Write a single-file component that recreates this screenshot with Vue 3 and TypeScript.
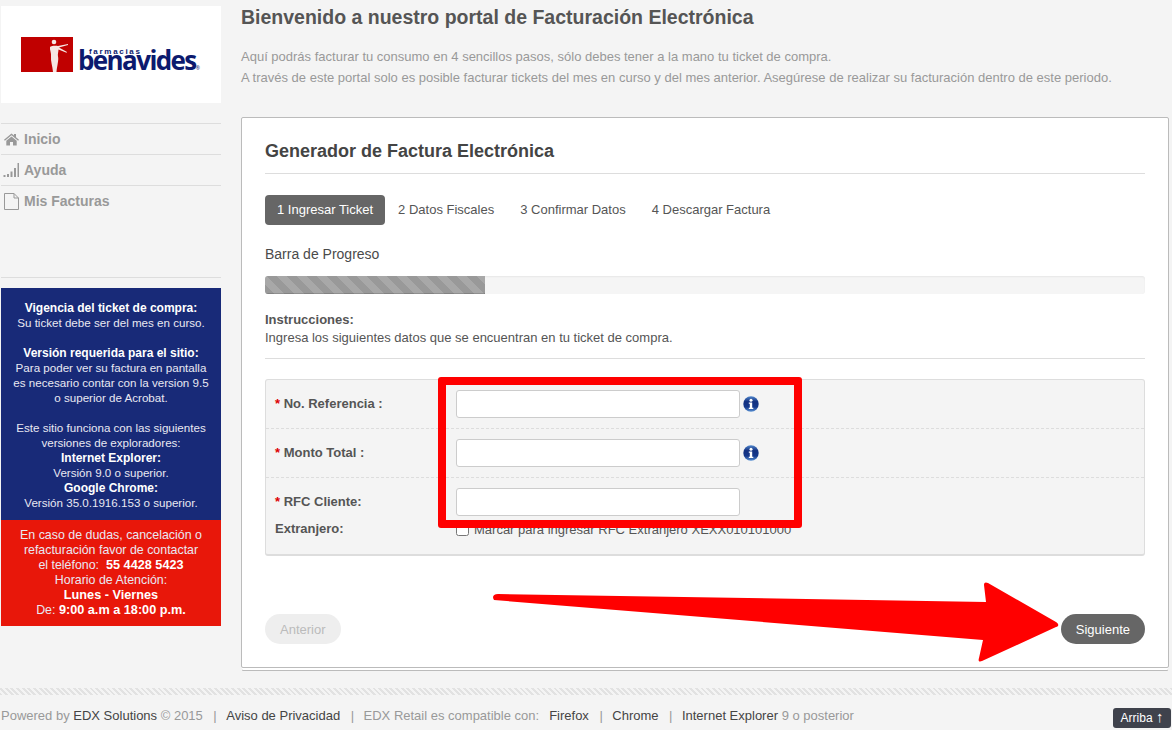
<script setup lang="ts">
interface FormRow {
  label: string
  info: boolean
}

const navItems = ['Inicio', 'Ayuda', 'Mis Facturas']
const steps = ['1 Ingresar Ticket', '2 Datos Fiscales', '3 Confirmar Datos', '4 Descargar Factura']

const rows: FormRow[] = [
  { label: 'No. Referencia :', info: true },
  { label: 'Monto Total :', info: true },
]
</script>

<template>
  <div class="page">
    <div class="layout">
      <aside class="sidebar">
        <div class="logo">
          <svg class="logo-mark" width="52" height="35" viewBox="0 0 52 35">
            <rect width="52" height="35" fill="#c00000" />
            <circle cx="33" cy="5" r="2.300" fill="#f6e6e2" />
            <path
              d="M29 10C30 8.500 36 8.500 37 9L47 7V8L38 10.500L46 15L45.500 15.800L37.500 12.500C37.500 15 36.500 17 37 19.500C38 23 36 29 35.500 35H32C31.500 29 29.500 24 30 19.500C30.500 16 28.500 13 29 10Z"
              fill="#f6e6e2"
            />
          </svg>
          <div class="logo-text">
            <span class="logo-small">farmacias</span>
            <span class="logo-big">benavides<i class="logo-reg">®</i></span>
          </div>
        </div>

        <nav class="nav">
          <a v-for="(item, i) in navItems" :key="item" class="nav-item">
            <svg v-if="i === 0" class="nav-icon" width="16" height="14" viewBox="0 0 16 14">
              <path d="M8 1.500 0.500 7.800l.9 1L8 3.300l6.600 5.500.9-1L12.500 5.300V2h-2v1.600L8 1.500z" fill="#999" />
              <path d="M8 4.400 2.800 8.700V13.500h3.700V10h3v3.500h3.700V8.700L8 4.400z" fill="#999" />
            </svg>
            <svg v-else-if="i === 1" class="nav-icon" width="16" height="14" viewBox="0 0 16 14">
              <path d="M0 12h2v2H0zM3.500 11h2v3h-2zM7 8.500h2V14H7zM10.500 5h2v9h-2zM14 0h1.500v14H14z" fill="#999" />
            </svg>
            <svg v-else class="nav-icon" width="16" height="17" viewBox="0 0 16 17">
              <path d="M1 .5h9.500L15 5v11.500H1z M10.500 .5V5H15" fill="none" stroke="#999" />
            </svg>
            <span>{{ item }}</span>
          </a>
        </nav>

        <div class="notice notice-blue">
          <b>Vigencia del ticket de compra:</b><br />
          Su ticket debe ser del mes en curso.<br /><br />
          <b>Versión requerida para el sitio:</b><br />
          Para poder ver su factura en pantalla<br />
          es necesario contar con la version 9.5<br />
          o superior de Acrobat.<br /><br />
          Este sitio funciona con las siguientes<br />
          versiones de exploradores:<br />
          <b>Internet Explorer:</b><br />
          Versión 9.0 o superior.<br />
          <b>Google Chrome:</b><br />
          Versión 35.0.1916.153 o superior.
        </div>
        <div class="notice notice-red">
          En caso de dudas, cancelación o<br />
          refacturación favor de contactar<br />
          el teléfono:&nbsp; <b>55 4428 5423</b><br />
          Horario de Atención:<br />
          <b>Lunes - Viernes</b><br />
          De: <b>9:00 a.m a 18:00 p.m.</b>
        </div>
      </aside>

      <main class="content">
        <h1 class="page-title">Bienvenido a nuestro portal de Facturación Electrónica</h1>
        <p class="intro">
          Aquí podrás facturar tu consumo en 4 sencillos pasos, sólo debes tener a la mano tu ticket de compra.<br />
          A través de este portal solo es posible facturar tickets del mes en curso y del mes anterior. Asegúrese de realizar su facturación dentro de este periodo.
        </p>

        <section class="card">
          <h2 class="card-title">Generador de Factura Electrónica</h2>

          <div class="steps">
            <span
              v-for="(step, i) in steps"
              :key="step"
              class="step"
              :class="{ active: i === 0 }"
            >{{ step }}</span>
          </div>

          <div class="progress-label">Barra de Progreso</div>
          <div class="progress">
            <div class="progress-fill" :style="{ width: '25%' }"></div>
          </div>

          <div class="instructions">
            <b>Instrucciones:</b><br />
            Ingresa los siguientes datos que se encuentran en tu ticket de compra.
          </div>

          <form class="form" @submit.prevent>
            <div v-for="row in rows" :key="row.label" class="form-row">
              <label class="form-label"><em>*</em> {{ row.label }}</label>
              <input class="form-input" type="text" />
              <svg v-if="row.info" class="info" width="16" height="16" viewBox="0 0 16 16">
                <defs>
                  <linearGradient id="infoGrad" x1="0" y1="0" x2="0" y2="1">
                    <stop offset="0" stop-color="#4f86cc" />
                    <stop offset=".35" stop-color="#123080" />
                    <stop offset=".7" stop-color="#14388c" />
                    <stop offset="1" stop-color="#5a92d4" />
                  </linearGradient>
                </defs>
                <circle cx="8" cy="8" r="7.700" fill="url(#infoGrad)" />
                <circle cx="8" cy="4.200" r="1.500" fill="#fff" />
                <path d="M5.800 6.500h3.400v5.300h1.100v1.300H5.800v-1.300h1V7.800h-1z" fill="#fff" />
              </svg>
            </div>
            <div class="form-row form-row-last">
              <label class="form-label"><em>*</em> RFC Cliente:</label>
              <input class="form-input" type="text" />
            </div>
            <div class="form-row-check">
              <label class="form-label">Extranjero:</label>
              <input class="form-check" type="checkbox" />
              <span class="check-text">Marcar para ingresar RFC Extranjero XEXX010101000</span>
            </div>
          </form>

          <div class="actions">
            <button class="btn btn-off" type="button">Anterior</button>
            <button class="btn" type="button">Siguiente</button>
          </div>
        </section>
      </main>
    </div>

    <footer class="footer">
      <div class="footer-stripe"></div>
      <div class="footer-text">Powered by <a>EDX Solutions</a> © 2015<i>|</i><a>Aviso de Privacidad</a><i>|</i>EDX Retail es compatible con:<a class="first-link">Firefox</a><i>|</i><a>Chrome</a><i>|</i><a>Internet Explorer</a> 9 o posterior</div>
    </footer>

    <a class="to-top">Arriba <span class="to-top-arrow">↑</span></a>

    <!-- red marks drawn over the screenshot -->
    <div class="mark-box"></div>
    <svg class="mark-arrow" width="580" height="90" viewBox="0 0 580 90">
      <path
        d="M4 18 C2 15 3 12 8 12 L496 20 L494 3 C494 0 496 0 498 1 L566 40 C569 42 569 44 566 45 L492 79 C489 80 488 79 489 76 L493 58 Z"
        fill="#ff0000"
      />
    </svg>
  </div>
</template>

<style>
html,
body {
  margin: 0;
  background: #f4f4f4;
}
</style>

<style scoped>
.page {
  position: relative;
  width: 1172px;
  height: 730px;
  overflow: hidden;
  background: #f4f4f4;
  font-family: "Liberation Sans", Arial, sans-serif;
  font-size: 13px;
  color: #555;
}

.layout {
  display: flex;
  gap: 20px;
  padding-left: 1px;
}

.sidebar {
  width: 220px;
  flex-shrink: 0;
  padding-top: 6px;
}

.logo {
  height: 97px;
  background: #fff;
  display: flex;
  align-items: flex-start;
  box-sizing: border-box;
  padding: 31px 0 0 20px;
}

.logo-mark {
  display: block;
}

.logo-text {
  position: relative;
  margin-left: 5px;
  height: 35px;
  width: 125px;
  color: #0c1a6e;
}

.logo-small {
  position: absolute;
  left: 11px;
  top: 11px;
  font-size: 8px;
  font-weight: 700;
  letter-spacing: 1.700px;
  line-height: 8px;
}

.logo-big {
  position: absolute;
  left: 0;
  bottom: -9px;
  font-family: "Open Sans", "Liberation Sans", sans-serif;
  font-size: 26px;
  font-weight: 700;
  letter-spacing: -1.600px;
  line-height: 26px;
  white-space: nowrap;
}

.logo-reg {
  font-size: 5px;
  font-style: normal;
  font-weight: 400;
  letter-spacing: 0;
}

.nav {
  margin-top: 20px;
  height: 154px;
  border-bottom: 1px solid #ddd;
}

.nav-item {
  display: flex;
  align-items: center;
  height: 30px;
  border-top: 1px solid #ddd;
  padding-left: 2px;
  font-size: 14px;
  font-weight: 700;
  color: #999;
}

.nav-icon {
  width: 17px;
  margin-right: 4px;
  flex-shrink: 0;
}

.notice {
  text-align: center;
  color: #e8e8f2;
  line-height: 15px;
}

.notice b {
  color: #fff;
  line-height: 1;
}

.notice-blue {
  margin-top: 10px;
  height: 232px;
  box-sizing: border-box;
  padding-top: 12px;
  font-size: 11.600px;
  background: #182a78;
}

.notice-blue b {
  font-size: 12px;
}

.notice-red {
  height: 106px;
  box-sizing: border-box;
  padding-top: 8px;
  font-size: 12.400px;
  background: #e8170a;
}

.notice-red b {
  font-size: 12.700px;
}

.content {
  width: 928px;
}

.page-title {
  margin: 5px 0 0;
  font-size: 19.500px;
  line-height: 24px;
  font-weight: 700;
  color: #555;
}

.intro {
  margin: 17px 0 0;
  font-size: 13px;
  line-height: 21px;
  color: #999;
}

.card {
  margin-top: 29px;
  height: 551px;
  box-sizing: border-box;
  padding: 0 23px;
  background: #fff;
  border: 1px solid #bbb;
  border-radius: 2px;
  box-shadow: 0 3px 0 -1px #fff, 0 4px 0 -1px #bbb;
}

.card-title {
  margin: 0;
  height: 55px;
  line-height: 66px;
  font-size: 18px;
  font-weight: 700;
  color: #444;
  border-bottom: 1px solid #ddd;
}

.steps {
  display: flex;
  margin-top: 21px;
}

.step {
  height: 30px;
  line-height: 30px;
  padding: 0 13px;
  color: #555;
  border-radius: 4px;
  white-space: nowrap;
}

.step.active {
  padding: 0 12px;
  background: #666;
  color: #fff;
}

.progress-label {
  margin-top: 21px;
  line-height: 16px;
  font-size: 14px;
  color: #4a4a4a;
}

.progress {
  margin-top: 14px;
  height: 18px;
  border-radius: 3px;
  background: #f5f5f5;
  box-shadow: inset 0 1px 2px rgba(0, 0, 0, .06);
  overflow: hidden;
}

.progress-fill {
  height: 100%;
  background: repeating-linear-gradient(45deg, #999 0, #999 7.070px, #a8a8a8 7.070px, #a8a8a8 14.140px);
  box-shadow: inset 0 -1px 0 rgba(0, 0, 0, .15);
}

.instructions {
  margin-top: 17px;
  height: 47px;
  line-height: 18px;
  border-bottom: 1px solid #ddd;
}

.form {
  margin-top: 20px;
  height: 177px;
  box-sizing: border-box;
  background: #f4f4f4;
  border: 1px solid #ddd;
  border-bottom-width: 2px;
  border-radius: 3px;
}

.form-row {
  display: flex;
  align-items: center;
  height: 49px;
  box-sizing: border-box;
  padding-left: 9px;
  border-bottom: 1px dashed #ddd;
}

.form-row-last {
  border-bottom: 0;
  height: 40px;
  padding-top: 8px;
}

.form-row-check {
  display: flex;
  align-items: center;
  padding-left: 9px;
  height: 22px;
}

.form-label {
  width: 181px;
  flex-shrink: 0;
  padding-bottom: 2px;
  font-weight: 700;
  color: #555;
}

.form-label em {
  font-style: normal;
  color: #d00;
}

.form-input {
  width: 284px;
  height: 28px;
  box-sizing: border-box;
  margin: 0;
  background: #fff;
  border: 1px solid #ccc;
  border-radius: 3px;
  outline: 0;
}

.info {
  margin-left: 3px;
}

.form-check {
  width: 13px;
  height: 13px;
  margin: 0 5px 0 0;
}

.check-text {
  color: #555;
}

.actions {
  display: flex;
  justify-content: space-between;
  margin-top: 58px;
}

.btn {
  height: 30px;
  padding: 0 15px;
  border: 0;
  border-radius: 15px;
  background: #666;
  color: #fff;
  font-family: inherit;
  font-size: 13px;
}

.btn-off {
  background: #eee;
  color: #bbb;
}

.footer {
  position: relative;
  margin-top: 20px;
}

.footer-stripe {
  height: 7px;
  background: repeating-linear-gradient(45deg, #e2e2e2 0, #e2e2e2 2px, #f4f4f4 2px, #f4f4f4 4px);
}

.footer-text {
  margin-top: 13px;
  padding-left: 1px;
  line-height: 16px;
  color: #999;
  white-space: nowrap;
}

.footer-text a {
  color: #444;
}

.footer-text .first-link {
  margin-left: 10px;
}

.footer-text i {
  font-style: normal;
  margin: 0 9.500px 0 10.500px;
  color: #999;
}

.to-top {
  position: absolute;
  right: 1px;
  bottom: 2px;
  width: 58px;
  height: 20px;
  line-height: 20px;
  text-align: center;
  font-size: 12px;
  color: #fff;
  background: #3f424c;
  border-radius: 3px;
}

.to-top-arrow {
  font-size: 15px;
  line-height: 1;
}

.mark-box {
  position: absolute;
  left: 438px;
  top: 377px;
  width: 364px;
  height: 151px;
  box-sizing: border-box;
  border: 8px solid #ff0000;
  border-radius: 3px;
}

.mark-arrow {
  position: absolute;
  left: 490px;
  top: 582px;
}
</style>
